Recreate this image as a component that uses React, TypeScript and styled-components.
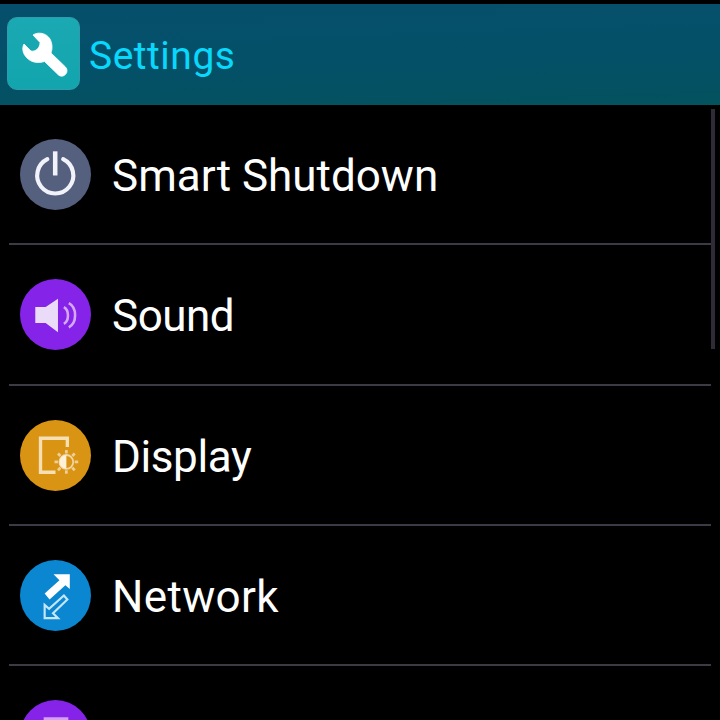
import React from "react";
import styled, { createGlobalStyle } from "styled-components";

const GlobalStyle = createGlobalStyle`
  html, body { margin: 0; background: #000; overflow: hidden; }
  * { box-sizing: border-box; }
`;

const Screen = styled.main`
  width: 720px;
  height: 720px;
  padding-top: 4px;
  overflow: hidden;
  position: relative;
  background: #000;
  font-family: Roboto, "Liberation Sans", sans-serif;
`;

const Header = styled.header`
  height: 101px;
  padding: 0 7px;
  display: flex;
  align-items: center;
  gap: 9px;
  background: linear-gradient(178deg, #064f6c 0%, #045068 55%, #03525e 100%);
`;

const AppIcon = styled.div`
  width: 73px;
  height: 73px;
  margin-top: -3px;
  border-radius: 10px;
  background: linear-gradient(#1ba9b3, #12a5ae);
  border: 1px solid #2f9bab;
  svg { display: block; width: 71px; height: 71px; }
`;

const Title = styled.h1`
  margin: 2px 0 0;
  font-size: 39px;
  line-height: 46px;
  font-weight: 400;
  letter-spacing: 0.5px;
  color: #08d8fb;
`;

const List = styled.ul`
  margin: 0;
  padding: 0 9px;
  list-style: none;
`;

const Row = styled.li`
  height: 140.25px;
  padding: 0 0 0 11px;
  display: flex;
  align-items: center;
  gap: 21px;
  border-bottom: 2px solid #3c3a45;
`;

const Disc = styled.span<{ $color: string }>`
  flex: none;
  width: 71px;
  height: 71px;
  margin-top: 1px;
  border-radius: 50%;
  background: ${(p) => p.$color};
  svg { display: block; width: 71px; height: 71px; }
`;

const Label = styled.span<{ $tracking: number }>`
  font-size: 44px;
  line-height: 52px;
  letter-spacing: ${(p) => p.$tracking}px;
  color: #fff;
  white-space: nowrap;
  margin-top: 4px;
`;

const ScrollThumb = styled.div`
  position: absolute;
  right: 5px;
  top: 109px;
  width: 4px;
  height: 240px;
  background: #2f2c38;
`;

const Wrench = () => (
  <svg viewBox="7 17 71 71">
    <path
      d="M32 34C37 30.500 45.500 32 49 38C51.500 42.500 51.500 48 50 52L64.500 66C69 71 62.500 78 57.500 74L43.500 60.500C37 62.500 30.500 61.500 26 57C21.500 52.500 20.800 47 23 43L30 50C34.500 51 39 47 39 41.500Z"
      fill="#fff"
      stroke="#fff"
      strokeWidth="0.8"
      strokeLinejoin="round"
    />
  </svg>
);

const PowerIcon = () => (
  <svg viewBox="20 138 72 72" fill="none" stroke="#f1f2fa" strokeLinecap="round">
    <path d="M47.700 158.500A18.300 18.300 0 1 0 63.800 158.500" strokeWidth="4.200" />
    <path d="M55.700 150.500V175" strokeWidth="4.600" strokeLinecap="butt" />
  </svg>
);

const SoundIcon = () => (
  <svg viewBox="20 278 72 72">
    <path d="M35.500 306.500H46L58.500 298V332L46 322.500H35.500Z" fill="#eadcf8" />
    <g fill="none" stroke="#d6a8fa" strokeWidth="2.600">
      <path d="M64.500 306.500C70 309.500 70 320.500 64.500 323.500" />
      <path d="M69.500 302.500C78 307 78 322.500 69.500 327" />
    </g>
  </svg>
);

const rays = [0, 45, 90, 135, 180, 225, 270, 315];

const DisplayIcon = () => (
  <svg viewBox="20 419 72 72">
    <path d="M68 446.500V437.500H40.800V472H56" fill="none" stroke="#f6dfb5" strokeWidth="3.400" />
    <circle cx="67" cy="461.500" r="7" fill="none" stroke="#f1d5a2" strokeWidth="1.800" />
    <path d="M67 454.500A7 7 0 0 0 67 468.500Z" fill="#fff0d8" />
    <g stroke="#efcf98" strokeWidth="2.800">
      {rays.map((a) => (
        <path key={a} d="M67 453V449.500" transform={`rotate(${a} 67 461.500)`} />
      ))}
    </g>
  </svg>
);

const NetworkIcon = () => (
  <svg viewBox="20 559 72 72">
    <path d="M54 573.500H70.500V588.500L66 584.500L50 599L45 593L60 579.500Z" fill="#fff" />
    <path
      d="M64.500 595L68 599L53.500 613L58.500 618H45V604.500L49.500 608.500Z"
      fill="none"
      stroke="#c4e7fa"
      strokeWidth="2.200"
    />
  </svg>
);

const PanelIcon = () => (
  <svg viewBox="20 700 72 72">
    <rect x="44" y="717.500" width="25" height="34" fill="#d6a0f8" />
  </svg>
);

const items = [
  { label: "Smart Shutdown", color: "#55607f", tracking: 0, icon: <PowerIcon /> },
  { label: "Sound", color: "#8524e8", tracking: -0.5, icon: <SoundIcon /> },
  { label: "Display", color: "#d99413", tracking: -0.4, icon: <DisplayIcon /> },
  { label: "Network", color: "#0b86d0", tracking: 0.35, icon: <NetworkIcon /> },
  { label: "Screen", color: "#8524e8", tracking: 0, icon: <PanelIcon /> },
];

export default function App() {
  return (
    <Screen>
      <GlobalStyle />
      <Header>
        <AppIcon><Wrench /></AppIcon>
        <Title>Settings</Title>
      </Header>
      <List>
        {items.map((item) => (
          <Row key={item.label}>
            <Disc $color={item.color}>{item.icon}</Disc>
            <Label $tracking={item.tracking}>{item.label}</Label>
          </Row>
        ))}
      </List>
      <ScrollThumb />
    </Screen>
  );
}
